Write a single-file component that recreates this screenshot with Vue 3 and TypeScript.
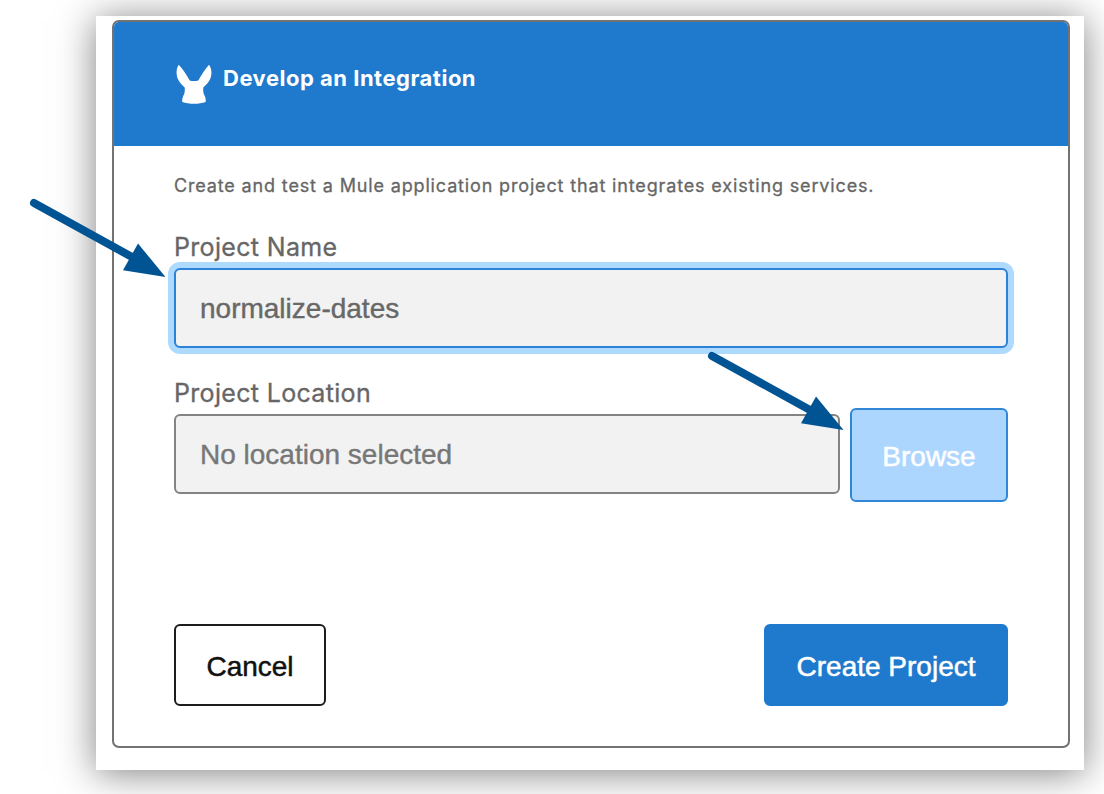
<script setup lang="ts">
import { ref } from 'vue'

interface Pointer {
  id: string
  placement: string
}

const projectName = ref<string>('normalize-dates')
const projectLocation = ref<string>('')
const pointers: Pointer[] = [
  { id: 'name', placement: 'at-name' },
  { id: 'browse', placement: 'at-browse' },
]
</script>

<template>
  <main class="stage">
    <section class="sheet">
      <form class="dialog" @submit.prevent>
        <header class="head">
          <svg class="mule" viewBox="0 0 36 40" aria-hidden="true">
            <path d="M2.700 .8C.3 4.600-.1 9.500 1.500 14.200C3.200 18 6 21 8.700 23.400C9 27 8.700 29.500 7.300 31.800C6.300 34 6 36 6.300 38C9.500 39.200 13.500 39.800 18 39.800S26.400 39.200 29.600 38C30 36 29.700 34 28.700 31.800C27.300 29.500 27 27 27.300 23.400C30 21 32.800 18 34.500 14.200C36.100 9.500 35.700 4.600 33 .8C29.500 4.500 25.700 10.400 22.300 16.400C19.500 17.100 16.500 17.100 13.700 16.400C10.300 10.400 6.500 4.500 2.700 .8Z" />
          </svg>
          <h1 class="title">Develop an Integration</h1>
        </header>
        <div class="body">
          <p class="intro">Create and test a Mule application project that integrates existing services.</p>
          <label class="label name-label" for="name">Project Name</label>
          <input id="name" v-model="projectName" class="field focused" type="text" />
          <label class="label location-label" for="location">Project Location</label>
          <div class="location">
            <input id="location" v-model="projectLocation" class="field" type="text" placeholder="No location selected" />
            <button class="button browse" type="button">Browse</button>
          </div>
          <footer class="actions">
            <button class="button cancel" type="button">Cancel</button>
            <button class="button create" type="submit">Create Project</button>
          </footer>
        </div>
      </form>
    </section>
    <svg v-for="p in pointers" :key="p.id" class="pointer" :class="p.placement" viewBox="0 0 138 82" aria-hidden="true">
      <path class="shaft" d="M6 6L104 60" />
      <path class="tip" d="M110 46.500L137.500 80L95 73.200Z" />
    </svg>
  </main>
</template>

<style>
html,
body {
  margin: 0;
  background: #fff;
  overflow: hidden;
}
</style>

<style scoped>
* {
  box-sizing: border-box;
}
.stage {
  position: relative;
  width: 1104px;
  height: 794px;
  padding: 16px 20px 24px 96px;
  overflow: hidden;
}
.sheet {
  height: 754px;
  padding: 4px 14px 22px 16px;
  background: #fff;
  box-shadow: 0 3px 36px rgba(0, 0, 0, 0.5);
}
.dialog {
  height: 728px;
  border: 2px solid #737373;
  border-radius: 7px;
  overflow: hidden;
}
.head {
  display: flex;
  height: 124px;
  padding: 42px 62px 0;
  background: #1f79cc;
}
.mule {
  width: 36px;
  height: 40px;
  fill: #fff;
}
.title {
  margin: 2px 0 0 11px;
  font: 700 22px/24px Inter, sans-serif;
  letter-spacing: 0.5px;
  color: #fff;
}
.body {
  padding: 28px 60px 0;
}
.intro {
  margin: 0;
  font: 400 18px/24px Inter, sans-serif;
  letter-spacing: 0.85px;
  color: #666;
  white-space: nowrap;
  -webkit-text-stroke: 0.3px;
}
.label {
  display: block;
  height: 32px;
  font: 400 25px/32px Inter, sans-serif;
  letter-spacing: 0.33px;
  color: #666;
  -webkit-text-stroke: 0.3px;
}
.name-label {
  margin: 33px 0 5px;
}
.location-label {
  margin-top: 29px;
}
.field {
  display: block;
  width: 100%;
  height: 80px;
  padding: 2px 24px 0;
  border: 2px solid #838383;
  border-radius: 6px;
  background: #f2f2f2;
  font: 400 28px "Liberation Sans", sans-serif;
  color: #686868;
  outline: none;
  -webkit-text-stroke: 0.4px;
}
.field::placeholder {
  color: #777;
  opacity: 1;
}
.focused {
  border-color: #2c82d8;
  box-shadow: 0 0 0 6px #afdaff;
}
.location {
  display: flex;
  gap: 10px;
  align-items: flex-start;
  margin-top: -1px;
}
.location .field {
  width: 666px;
  margin-top: 6px;
}
.button {
  height: 82px;
  padding: 3px 0 0;
  border: 2px solid #1f79cc;
  border-radius: 6px;
  font: 400 28px "Liberation Sans", sans-serif;
  color: #fff;
  -webkit-text-stroke: 0.5px;
}
.browse {
  width: 158px;
  height: 94px;
  border-color: #3087d8;
  background: #add6ff;
}
.actions {
  display: flex;
  justify-content: space-between;
  margin-top: 122px;
}
.cancel {
  width: 152px;
  border-color: #1c1c1c;
  background: #fff;
  color: #111;
}
.create {
  width: 244px;
  background: #1f79cc;
}
.pointer {
  position: absolute;
  width: 138px;
  height: 82px;
}
.at-name {
  left: 28px;
  top: 197px;
}
.at-browse {
  left: 706px;
  top: 350px;
}
.shaft {
  fill: none;
  stroke: #005493;
  stroke-width: 8;
  stroke-linecap: round;
}
.tip {
  fill: #005493;
}
</style>
